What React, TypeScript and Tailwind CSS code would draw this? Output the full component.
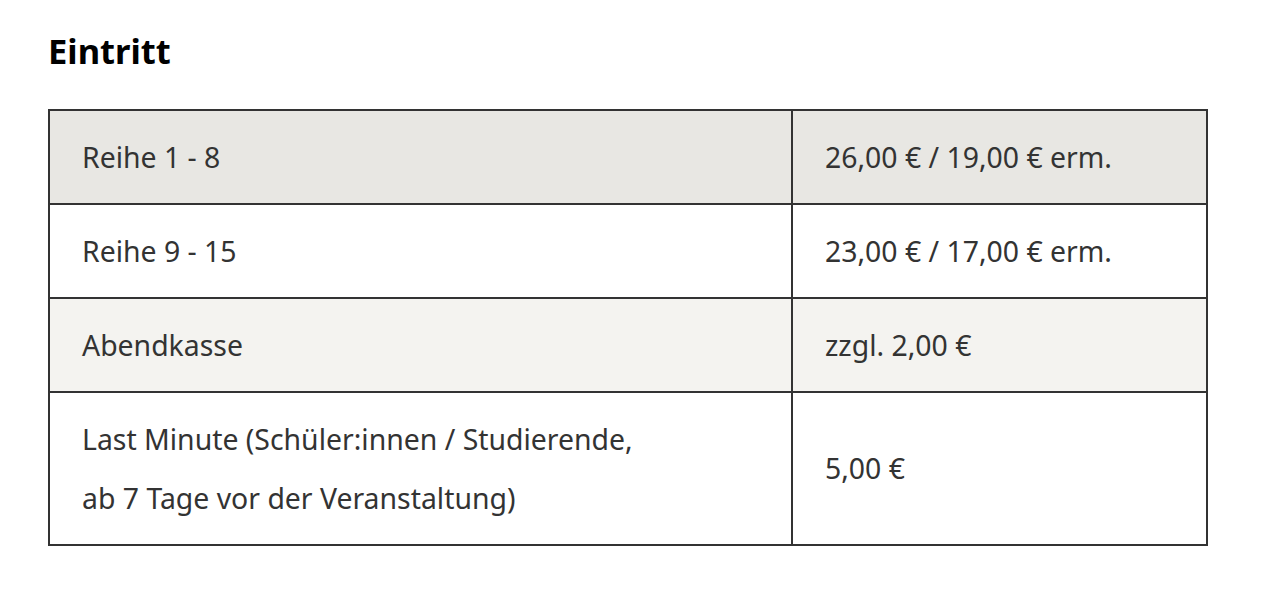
const ROWS = [
  { label: ["Reihe 1 - 8"], price: "26,00 € / 19,00 € erm.", bg: "bg-[#e8e7e3]" },
  { label: ["Reihe 9 - 15"], price: "23,00 € / 17,00 € erm.", bg: "bg-white" },
  { label: ["Abendkasse"], price: "zzgl. 2,00 €", bg: "bg-[#f4f3f0]" },
  {
    label: ["Last Minute (Schüler:innen / Studierende,", "ab 7 Tage vor der Veranstaltung)"],
    price: "5,00 €",
    bg: "bg-white",
  },
];

export default function App() {
  return (
    <div className="min-h-screen bg-white px-12 pt-[29px] font-['Noto_Sans',sans-serif]">
      <h2 className="text-[34.5px] leading-[44px] font-bold text-black">Eintritt</h2>

      <div className="mt-9 w-[1160px] border-2 border-[#333333] text-[28.4px] leading-[59px] text-[#333333]">
        {ROWS.map((r, i) => (
          <div
            key={i}
            className={`grid grid-cols-[743px_1fr] ${r.bg} ${i > 0 ? "border-t-2 border-[#333333]" : ""}`}
          >
            <div className="border-r-2 border-[#333333] px-8 py-[16.5px]">
              {r.label.map((l) => (
                <div key={l}>{l}</div>
              ))}
            </div>
            <div className="flex items-center px-8 py-[16.5px]">{r.price}</div>
          </div>
        ))}
      </div>
    </div>
  );
}
